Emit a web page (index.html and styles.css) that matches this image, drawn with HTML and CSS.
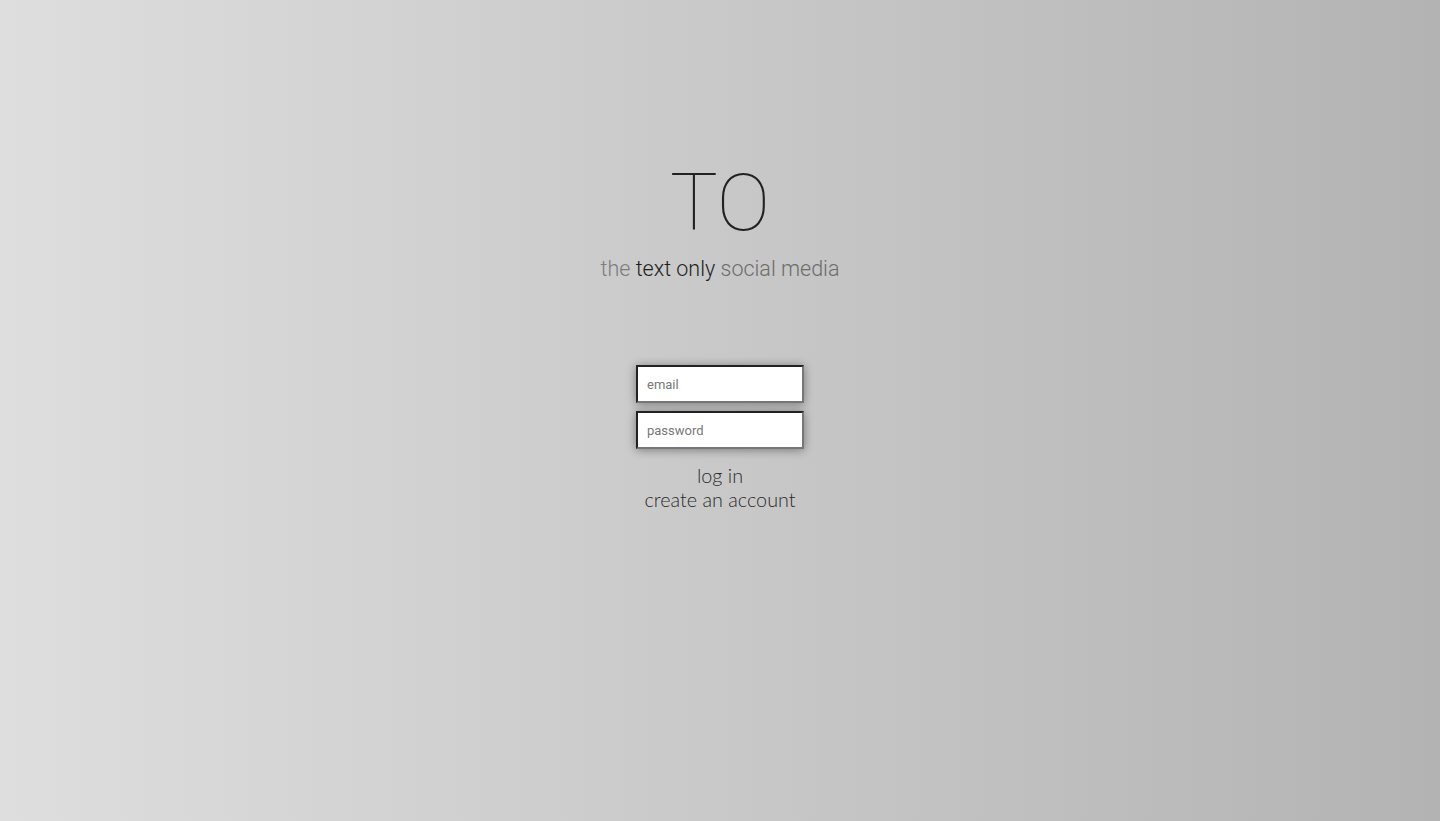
FILE: index.html
```html
<!DOCTYPE html>
<html>
<head>
<meta charset="utf-8">
<link rel="stylesheet" href="styles.css">
</head>
<body>
<main class="page">
  <header class="brand">
    <h1 class="logo">TO</h1>
    <p class="tagline"><span class="muted">the</span> <span class="strong">text only</span> <span class="muted2">social media</span></p>
  </header>
  <form class="login">
    <input class="field" type="text" placeholder="email">
    <input class="field" type="password" placeholder="password">
    <div class="actions">
      <a class="link" href="#">log in</a>
      <a class="link" href="#">create an account</a>
    </div>
  </form>
</main>
</body>
</html>
```

FILE: styles.css
```css
html, body {
  margin: 0;
  height: 100%;
}
body {
  background: linear-gradient(to right, #dedede 0%, #b3b3b3 100%);
  font-family: Roboto, "Liberation Sans", sans-serif;
}
.page {
  display: flex;
  flex-direction: column;
  align-items: center;
  padding-top: 156px;
}
.brand {
  display: flex;
  flex-direction: column;
  align-items: center;
}
.logo {
  margin: 0;
  font-family: Roboto, sans-serif;
  font-weight: 100;
  font-size: 80px;
  line-height: 94px;
  color: #222;
}
.tagline {
  margin: 4px 0 0;
  font-family: Roboto, sans-serif;
  font-weight: 300;
  font-size: 21.5px;
  line-height: 30px;
  color: #777;
}
.tagline .muted { color: #7c7c7c; }
.tagline .strong { color: #1e1e1e; }
.tagline .muted2 { color: #6c6c6c; }
.login {
  margin-top: 81px;
  display: flex;
  flex-direction: column;
  align-items: center;
  gap: 8px;
}
.field {
  box-sizing: border-box;
  width: 168px;
  height: 38px;
  margin: 0;
  padding: 0 9px;
  border-style: solid;
  border-width: 2px;
  border-color: #222 #777 #777 #222;
  background: #fff;
  font-family: Roboto, sans-serif;
  font-size: 13px;
  color: #333;
  box-shadow: 0 1px 9px rgba(0,0,0,0.4);
  outline: none;
}
.field::placeholder { color: #777; }
.actions {
  margin-top: 6px;
  display: flex;
  flex-direction: column;
  align-items: center;
}
.link {
  font-family: Lato, sans-serif;
  font-weight: 300;
  font-size: 19.8px;
  line-height: 24px;
  color: #2a2a2a;
  text-decoration: none;
}
```
